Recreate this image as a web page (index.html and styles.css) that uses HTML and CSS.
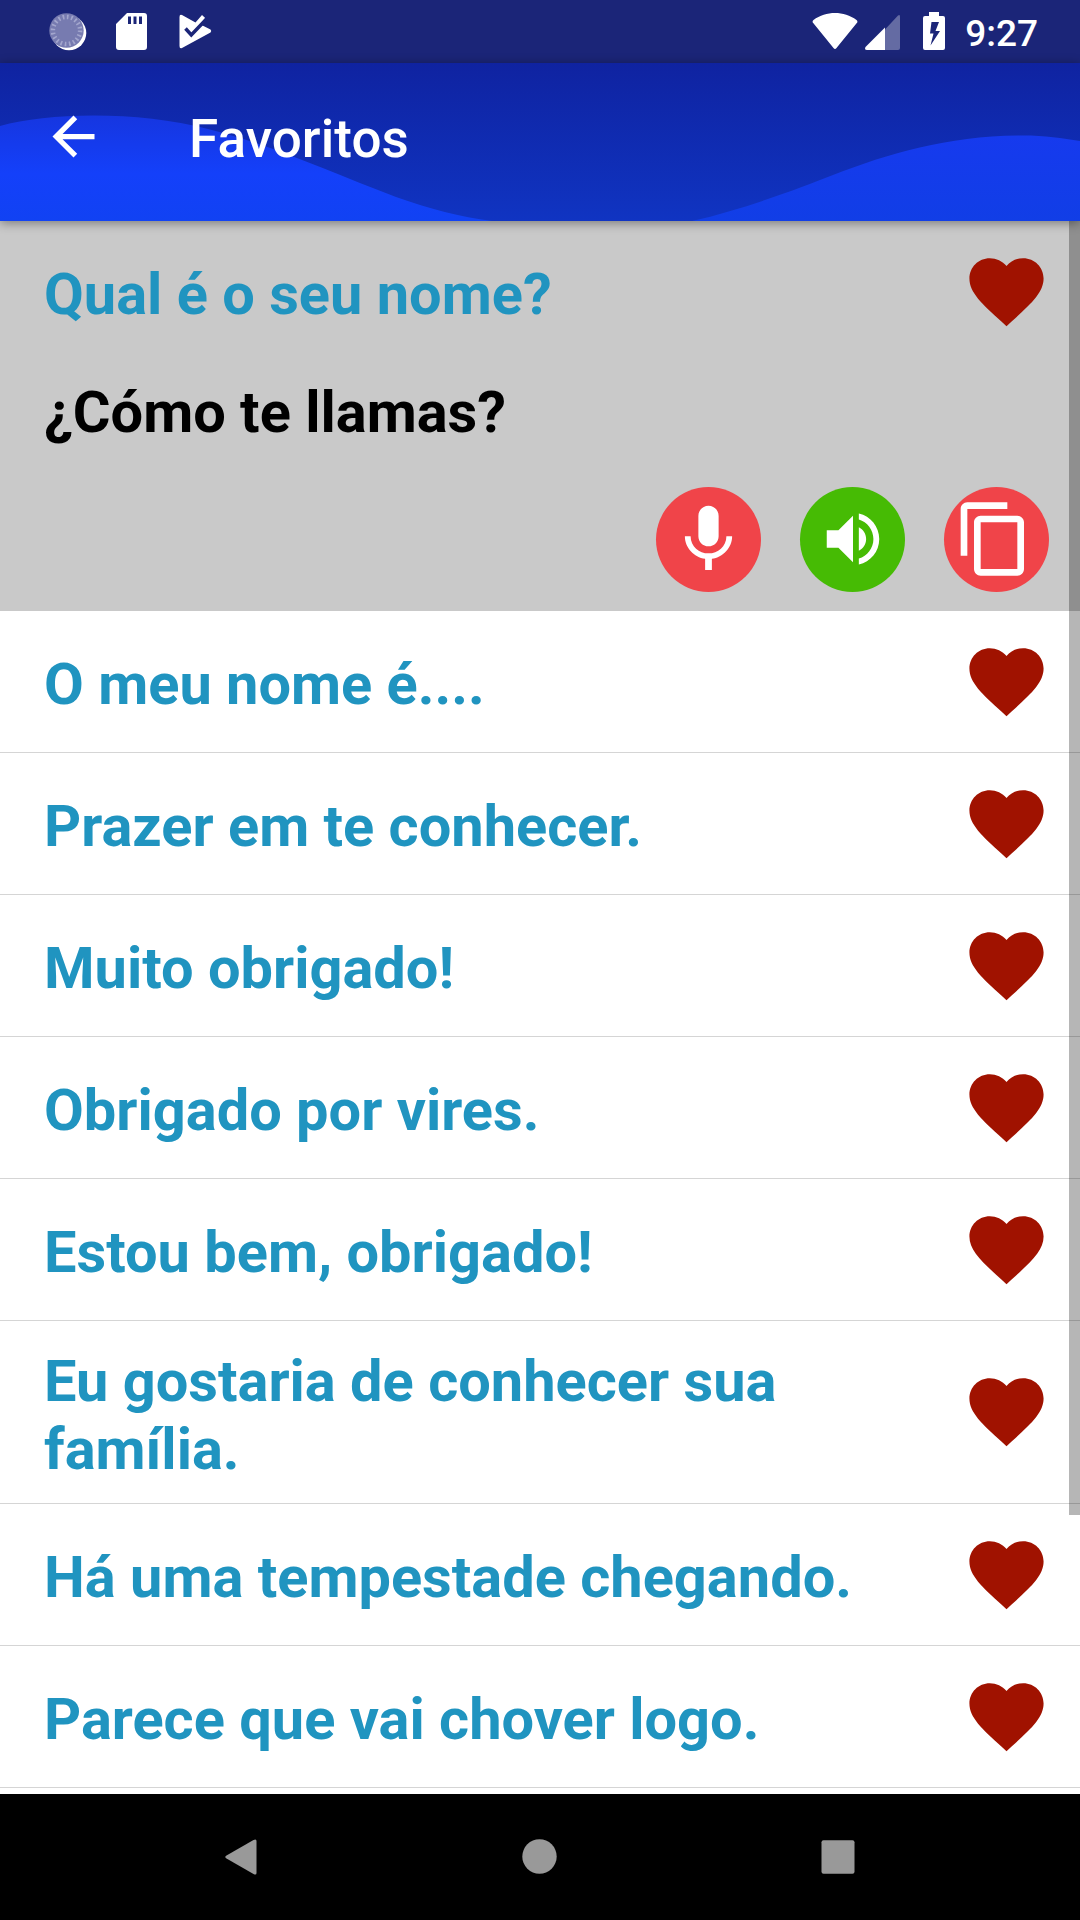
FILE: index.html
```
<!DOCTYPE html>
<html lang="pt">
<head>
	<title>Favoritos</title>
	<meta charset="utf-8">
	<meta name="viewport" content="width=device-width, initial-scale=1">
	<link rel="stylesheet" href="styles.css">
</head>
<body>
<svg class="defs" width="0" height="0">
	<symbol id="heart" viewBox="0 0 24 24"><path d="M12 21.35l-1.45-1.32C5.4 15.36 2 12.28 2 8.5 2 5.42 4.42 3 7.5 3c1.74 0 3.41.81 4.5 2.09C13.09 3.81 14.76 3 16.5 3 19.58 3 22 5.42 22 8.5c0 3.78-3.4 6.86-8.55 11.54L12 21.35z"/></symbol>
</svg>
<div class="screen">
	<div class="statusbar">
		<svg class="status-left" width="164" height="40" viewBox="48 12 164 40">
			<circle cx="69" cy="33" r="17.300" fill="#fff"/>
			<circle cx="66.500" cy="30.500" r="17.200" fill="#777bb0"/>
			<circle cx="66.500" cy="30.500" r="13.600" fill="none" stroke="#a3a6cd" stroke-width="4.500" stroke-dasharray="1.700 2.570"/>
			<path fill="#fff" fill-rule="evenodd" d="M127 13h17a3 3 0 0 1 3 3v31a3 3 0 0 1-3 3h-25a3 3 0 0 1-3-3V24zM128 16.500v7.500h3v-7.500zM133.500 16.500v7.500h3v-7.500zM139 16.500v7.500h3v-7.500z"/>
			<path fill="#fff" d="M179.500 17Q179.500 14 182 15L195.500 22.500L202 15L205.200 18L200 24.500L203.500 26L210.500 29.500Q212 31 210.500 32.500L182 48Q179.500 49 179.500 46z"/>
			<path fill="none" stroke="#1b2578" stroke-width="3.500" d="M185.500 28.500L191.300 35L207 18.500"/>
		</svg>
		<div class="status-right">
			<svg width="133" height="40" viewBox="812 11 133 40" fill="#fff">
				<path d="M813.200 23Q811.800 21.500 813.500 20C826 10.700 844 10.700 856.500 20Q858.200 21.500 856.800 23L836.500 48Q835 49.800 833.500 48z"/>
				<path opacity=".32" d="M885 29.500L898 15.500Q900 14 900 16.500V48Q900 50 898 50H885z"/>
				<path d="M885 27.500V50H867Q864 50 865.500 47z"/>
				<path fill-rule="evenodd" d="M929 12h10v4h4q2 0 2 2v30q0 2-2 2h-18q-2 0-2-2V18q0-2 2-2h4zM931.500 22L930 33.500h3.500L930.500 45.500L940 31h-4.500L939 22z"/>
			</svg>
			<span class="clock">9:27</span>
		</div>
	</div>

	<div class="toolbar">
		<svg class="waves" viewBox="0 63 1080 158">
			<defs>
				<linearGradient id="wave" x1="0" y1="0" x2="0" y2="1">
					<stop offset="0" stop-color="#1636e0"/>
					<stop offset=".55" stop-color="#1440fa"/>
					<stop offset="1" stop-color="#1142f3"/>
				</linearGradient>
				<linearGradient id="wave2" x1="0" y1="0" x2="0" y2="1">
					<stop offset="0" stop-color="#163aee"/>
					<stop offset="1" stop-color="#113ee6"/>
				</linearGradient>
			</defs>
			<path fill="url(#wave)" d="M0 126C50 112 140 111 208 129C275 146 330 172 396 197C430 209 460 217 492 221H0z"/>
			<path fill="url(#wave2)" d="M692 221C745 209 800 188 833 175C890 153 950 135.500 1023 135.500C1045 135.500 1062 138 1080 141V221z"/>
		</svg>
		<a class="back" href="#"><svg width="63" height="63" viewBox="0 0 24 24" fill="#fff"><path d="M20 11H7.830l5.590-5.590L12 4l-8 8 8 8 1.410-1.410L7.830 13H20v-2z"/></svg></a>
		<h1 class="title">Favoritos</h1>
	</div>

	<div class="list">
		<div class="item open">
			<div class="row">
				<div class="phrase">Qual é o seu nome?</div>
				<svg class="heart"><use href="#heart"/></svg>
			</div>
			<div class="translation">¿Cómo te llamas?</div>
			<div class="actions">
				<a class="btn" href="#"><svg width="81" height="81" viewBox="0 0 24 24"><path d="M12 14c1.660 0 3-1.340 3-3V5c0-1.660-1.340-3-3-3S9 3.340 9 5v6c0 1.660 1.340 3 3 3zm5.300-3c0 3-2.540 5.100-5.300 5.100S6.700 14 6.700 11H5c0 3.410 2.720 6.230 6 6.720V21h2v-3.280c3.280-.480 6-3.300 6-6.720h-1.700z"/></svg></a>
				<a class="btn green" href="#"><svg width="70" height="70" viewBox="0 0 24 24"><path d="M3 9v6h4l5 5V4L7 9H3zm13.500 3c0-1.770-1.020-3.290-2.500-4.030v8.050c1.480-.730 2.500-2.250 2.500-4.020zM14 3.230v2.060c2.890.860 5 3.540 5 6.710s-2.110 5.850-5 6.710v2.060c4.010-.910 7-4.490 7-8.770s-2.990-7.860-7-8.770z"/></svg></a>
				<a class="btn copy" href="#"><svg width="80" height="80" viewBox="0 0 24 24"><path d="M16 1H4c-1.100 0-2 .9-2 2v14h2V3h12V1zm3 4H8c-1.100 0-2 .9-2 2v14c0 1.100.9 2 2 2h11c1.100 0 2-.9 2-2V7c0-1.100-.9-2-2-2zm0 16H8V7h11v14z"/></svg></a>
			</div>
		</div>
		<div class="item row">
			<div class="phrase">O meu nome é....</div>
			<svg class="heart"><use href="#heart"/></svg>
		</div>
		<div class="item row">
			<div class="phrase">Prazer em te conhecer.</div>
			<svg class="heart"><use href="#heart"/></svg>
		</div>
		<div class="item row">
			<div class="phrase">Muito obrigado!</div>
			<svg class="heart"><use href="#heart"/></svg>
		</div>
		<div class="item row">
			<div class="phrase">Obrigado por vires.</div>
			<svg class="heart"><use href="#heart"/></svg>
		</div>
		<div class="item row">
			<div class="phrase">Estou bem, obrigado!</div>
			<svg class="heart"><use href="#heart"/></svg>
		</div>
		<div class="item row">
			<div class="phrase">Eu gostaria de conhecer sua família.</div>
			<svg class="heart"><use href="#heart"/></svg>
		</div>
		<div class="item row">
			<div class="phrase">Há uma tempestade chegando.</div>
			<svg class="heart"><use href="#heart"/></svg>
		</div>
		<div class="item row">
			<div class="phrase">Parece que vai chover logo.</div>
			<svg class="heart"><use href="#heart"/></svg>
		</div>
		<div class="scrollbar"></div>
	</div>

	<div class="navbar">
		<svg width="36" height="36" viewBox="0 0 36 36"><path d="M2.500 16.500L29.500 1Q32.500 -.5 32.500 2V34Q32.500 36.500 29.500 35L2.500 19.500Q0 18 2.500 16.500z"/></svg>
		<svg width="36" height="36" viewBox="0 0 36 36"><circle cx="17.500" cy="17.500" r="17.200"/></svg>
		<svg width="36" height="36" viewBox="0 0 36 36"><rect x="1.500" y="1.300" width="33" height="33.400" rx="2"/></svg>
	</div>
</div>
</body>
</html>
```
FILE: styles.css
```
* {
	padding: 0;
	margin: 0;
	box-sizing: border-box;
}

body {
	font-family: Roboto, "Noto Sans", sans-serif;
	background: #fff;
	overflow: hidden;
}

a {
	text-decoration: none;
}

.defs {
	position: absolute;
}

.screen {
	display: flex;
	flex-direction: column;
	width: 1080px;
	height: 1920px;
}

/* status bar */
.statusbar {
	display: flex;
	justify-content: space-between;
	flex: none;
	height: 63px;
	padding: 11px 42px 0 48px;
	background: #1b2578;
}

.status-left {
	margin-top: 1px;
}

.status-right {
	display: flex;
	gap: 20px;
}

.clock {
	color: #fff;
	font-size: 37px;
	font-weight: 500;
	line-height: 45px;
}

/* toolbar */
.toolbar {
	position: relative;
	z-index: 1;
	display: flex;
	align-items: center;
	flex: none;
	height: 158px;
	padding: 0 42px 11px;
	background: linear-gradient(#0f23a1, #1034c2);
	box-shadow: 0 2px 10px rgba(0,0,0,.4);
}

.waves {
	position: absolute;
	left: 0;
	top: 0;
	width: 1080px;
	height: 158px;
}

.back {
	position: relative;
	height: 63px;
}

.title {
	position: relative;
	margin-left: 84px;
	color: #fff;
	font-size: 53px;
	font-weight: 500;
	letter-spacing: .1px;
	line-height: 62px;
	padding-top: 5px;
}

/* favourites */
.list {
	position: relative;
	flex: 1;
	min-height: 0;
	overflow: hidden;
}

.item {
	border-bottom: 1px solid #d5d5d5;
}

.row {
	display: flex;
	align-items: center;
	min-height: 142px;
	padding: 21px 29px 20px 44px;
}

.open {
	height: 390px;
	background: #c9c9c9;
	border-bottom-color: #c9c9c9;
}

.open .row {
	min-height: 141px;
}

.phrase {
	flex: 1;
	padding-top: 6px;
	color: #2094c0;
	font-size: 57.75px;
	font-weight: bold;
	line-height: 67.5px;
}

.translation {
	padding: 17px 44px 0;
	color: #000;
	font-size: 57.75px;
	font-weight: bold;
	line-height: 67.5px;
}

.heart {
	flex: none;
	width: 89px;
	height: 89px;
	margin-bottom: 2px;
	fill: #a01200;
}

.actions {
	display: flex;
	justify-content: flex-end;
	gap: 39px;
	padding: 40px 31px 0;
}

.btn {
	display: flex;
	align-items: center;
	justify-content: center;
	width: 105px;
	height: 105px;
	border-radius: 50%;
	background: #f04449;
}

.btn svg {
	fill: #fff;
}

.green {
	background: #46bb04;
}

.copy {
	padding-right: 5px;
}

.scrollbar {
	position: absolute;
	top: 0;
	right: 0;
	width: 11px;
	height: 1294px;
	background: rgba(0,0,0,.285);
}

/* system buttons */
.navbar {
	display: flex;
	justify-content: space-between;
	flex: none;
	height: 126px;
	padding: 45px 224px 0;
	background: #000;
	fill: #999;
}
```
